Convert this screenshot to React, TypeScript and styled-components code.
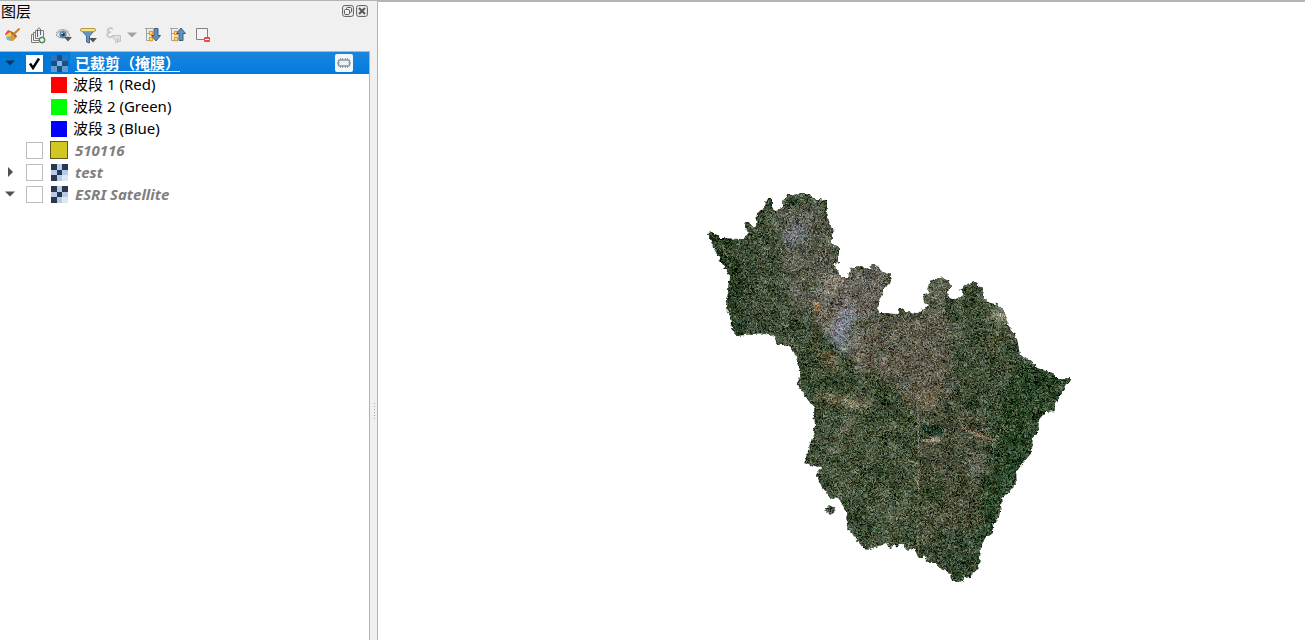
import React, { useState } from "react";
import styled, { createGlobalStyle } from "styled-components";

const GlobalStyle = createGlobalStyle`
  * { box-sizing: border-box; }
  html, body { margin: 0; height: 100%; }
  #root { height: 100%; }
  body, button, input {
    font-family: "Noto Sans", "Noto Sans CJK SC", sans-serif;
    font-size: 15px;
    color: #000;
  }
`;

const Window = styled.div`
  display: flex;
  min-height: 100%;
  background: #fff;
`;

const Dock = styled.aside`
  display: flex;
  flex: 0 0 378px;
  background: #f0f0f0;
  border-top: 1px solid #b4b4b4;
  border-right: 1px solid #b4b4b4;
`;

const DockBody = styled.div`
  display: flex;
  flex: 1;
  min-width: 0;
  flex-direction: column;
`;

const TitleBar = styled.header`
  display: flex;
  align-items: center;
  height: 20px;
  padding: 0 1px;
`;

const Title = styled.h1`
  flex: 1;
  margin: 0;
  font-size: 15px;
  font-weight: 400;
  line-height: 18px;
`;

const IconButton = styled.button<{ $width?: number }>`
  display: flex;
  align-items: center;
  justify-content: center;
  flex: none;
  width: ${(p) => p.$width ?? 25}px;
  height: 20px;
  padding: 0;
  border: 0;
  background: none;
`;

const ToolBar = styled.div`
  display: flex;
  align-items: center;
  height: 30px;
  padding-bottom: 2px;
`;

const Tree = styled.ul`
  flex: 1;
  margin: 0;
  padding: 0;
  list-style: none;
  background: #fff;
  border-top: 1px solid #b4b4b4;
  border-right: 1px solid #b4b4b4;
`;

const Row = styled.li<{ $selected?: boolean }>`
  display: flex;
  align-items: center;
  height: 22px;
  line-height: 20px;
  background: ${(p) => (p.$selected ? "#0078d7" : "transparent")};
`;

const LayerRow = styled(Row)`
  padding-bottom: 2px;
`;

const Toggle = styled(IconButton)`
  margin-right: 6px;
`;

const ToggleSpace = styled.span`
  flex: 0 0 26px;
`;

const Check = styled.input`
  appearance: none;
  display: flex;
  flex: none;
  align-items: center;
  justify-content: center;
  width: 17px;
  height: 17px;
  margin: 0 5px 0 0;
  border: 1px solid #bdbdbd;
  background: #fff;
  &:checked {
    border-color: #fff;
    background: #fff
      url("data:image/svg+xml,%3Csvg xmlns='http://www.w3.org/2000/svg' viewBox='0 0 15 15'%3E%3Cpath d='M3 7.5L6 12L12 2.5' fill='none' stroke='black' stroke-width='2.4'/%3E%3C/svg%3E");
  }
`;

const IconCell = styled.span`
  display: flex;
  flex: none;
  justify-content: center;
  width: 22px;
`;

const LayerName = styled.label<{ $selected?: boolean }>`
  display: flex;
  flex: 1;
  align-items: center;
  justify-content: space-between;
  height: 22px;
  padding: 0 16px 0 5px;
  font-weight: 700;
  font-style: ${(p) => (p.$selected ? "normal" : "italic")};
  color: ${(p) => (p.$selected ? "#fff" : "#808080")};
  background: ${(p) => (p.$selected ? "linear-gradient(#1a86dc, #027be0)" : "none")};
`;

const Underlined = styled.span`
  text-decoration: underline;
  text-underline-offset: 2px;
  white-space: nowrap;
`;

const MemoryButton = styled(IconButton)`
  height: 18px;
  border-radius: 2px;
  background: #f5f6f7;
`;

const BandRow = styled(Row)`
  padding-left: 51px;
  gap: 6px;
`;

const BandName = styled.span`
  padding-bottom: 2px;
`;

const Swatch = styled.span<{ $color: string; $outlined?: boolean }>`
  flex: none;
  width: ${(p) => (p.$outlined ? 18 : 16)}px;
  height: ${(p) => (p.$outlined ? 18 : 16)}px;
  background: ${(p) => p.$color};
  border: ${(p) => (p.$outlined ? "1px solid #5c5a20" : "0")};
`;

const Splitter = styled.div`
  display: flex;
  flex: 0 0 7px;
  flex-direction: column;
  align-items: center;
  justify-content: center;
  gap: 2px;
  padding: 180px 0 0 2px;
`;

const Grip = styled.i`
  width: 1px;
  height: 1px;
  background: #a8a8a8;
`;

const Canvas = styled.main`
  position: relative;
  flex: 1;
  min-width: 0;
  overflow: hidden;
  border-top: 2px solid #b4b4b4;
`;

const Raster = styled.svg`
  position: absolute;
  left: 322px;
  top: 183px;
`;

const FloatIcon = () => (
  <svg width="12" height="12" viewBox="0 0 12 12" fill="none" stroke="#5a5a5a">
    <rect x=".6" y=".6" width="10.8" height="10.8" rx="2" />
    <rect x="4.5" y="2.5" width="5" height="5" rx="1" />
    <rect x="2.5" y="4.5" width="5" height="5" rx="1" fill="#f0f0f0" />
  </svg>
);

const CloseIcon = () => (
  <svg width="12" height="12" viewBox="0 0 12 12" fill="none" stroke="#5a5a5a">
    <rect x=".6" y=".6" width="10.8" height="10.8" rx="2" />
    <path d="M3 3L9 9M9 3L3 9" strokeWidth="2.2" />
  </svg>
);

const StyleIcon = () => (
  <svg width="16" height="16" viewBox="0 0 16 16">
    <path d="M0 7L3 3L8 5L6 9L1 9Z" fill="#e8474c" />
    <path d="M1 8L5 5L9 8L6 11L1 11Z" fill="#fcdc3c" />
    <path d="M1 10L5 9L9 12L6 14L2 13Z" fill="#75b5e8" />
    <path d="M6 6L11 11L8 14C6 14 5 13 4 12C6 11 6 9 6 6Z" fill="#dd9a32" />
    <path d="M6 6L8 5L12 9L11 11Z" fill="#9d592b" />
    <path d="M9 7L14 2" stroke="#c58138" strokeWidth="2" strokeLinecap="round" />
  </svg>
);

const GroupIcon = () => (
  <svg width="16" height="17" viewBox="0 0 16 17" fill="none" stroke="#7d7d79">
    <path d="M3.5 7.5H1.5V15.5H9M5.5 5.5H3.5V13.5H10M5.5 3.5H13.5V11.5H5.5Z" />
    <path d="M7.500 10V3C7.500 .5 10.500 .5 10.500 3V8" stroke="#47688a" />
    <circle cx="12" cy="13" r="3" fill="#6aaa70" stroke="#498553" />
    <path d="M12 11V15M10 13H14" stroke="#fff" strokeWidth="1.3" />
  </svg>
);

const EyeIcon = () => (
  <svg width="18" height="16" viewBox="0 0 18 16">
    <path d="M1 8C4 3 11 2 15 8C11 12 5 12 1 8Z" fill="#e8edef" stroke="#969a9c" />
    <path d="M1 6C5 1 11 2 14 5" fill="none" stroke="#a8aaac" />
    <circle cx="8" cy="7.5" r="3.6" fill="#5c87aa" />
    <circle cx="8" cy="7.5" r="1.8" fill="#223f59" />
    <circle cx="7" cy="6.5" r=".8" fill="#fff" />
    <path d="M9 10H17L13 14.5Z" fill="#555" />
  </svg>
);

const FilterIcon = () => (
  <svg width="18" height="17" viewBox="0 0 18 17">
    <path d="M1.5 3.5L6.500 9V15L9.500 16V9L14.500 3.500Z" fill="#6895bd" stroke="#42698e" />
    <rect x=".5" y="1.5" width="15" height="3" rx="1.5" fill="#f4e48a" stroke="#b49b42" />
    <path d="M9 11H17L13 15.5Z" fill="#555" />
  </svg>
);

const ExpressionIcon = () => (
  <svg width="16" height="16" viewBox="0 0 16 16" fill="none" stroke="#c3c3c3">
    <path d="M7 2C4 0 1 2 2 4C2 5 3 5 5 5C1 5 0 9 3 10C5 11 7 9 7 8" strokeWidth="1.6" />
    <path d="M7.500 8.500H14.500V14.500H12.500V11.500M7.500 8.500V11.500L9.500 12.500V15.500H11.500V11.500" fill="#e2e2e2" />
  </svg>
);

const ExpandIcon = ({ up = false }: { up?: boolean }) => (
  <svg width="16" height="16" viewBox="0 0 16 16">
    <path d="M0 1.500H8M1.500 2V13.500H5M2 6.500H5" stroke="#a0a0a0" fill="none" />
    <path d="M4.500 4.500H7.500V7.500H4.500ZM4.500 10.500H7.500V13.500H4.500Z" fill="#fff2cf" stroke="#ed9b28" strokeWidth="1.3" />
    <path
      d={up ? "M9 13.500V6.500H6.500L11 1L15.500 6.500H13V13.500Z" : "M9 1.500V8.500H6.500L11 14L15.500 8.500H13V1.500Z"}
      fill="#668fb6"
      stroke="#365f87"
    />
  </svg>
);

const RemoveIcon = () => (
  <svg width="16" height="16" viewBox="0 0 16 16">
    <path d="M1.500 1.500H12.500V12.500H1.500Z" fill="#f4f4f4" stroke="#838383" />
    <rect x="9" y="10" width="6" height="5" rx="1" fill="#e94a50" />
    <path d="M10 12.500H14" stroke="#fff" />
  </svg>
);

const MemoryIcon = () => (
  <svg width="14" height="12" viewBox="0 0 14 12" fill="none" stroke="#8799a9">
    <path d="M3.500 1V3M5.500 1V3M8.500 1V3M10.500 1V3M3.500 9V11M5.500 9V11M8.500 9V11M10.500 9V11" />
    <rect x="1.500" y="3" width="11" height="6" rx="1" fill="#eef1f3" strokeWidth="1.6" />
    <path d="M0 6H1M13 6H14" />
  </svg>
);

const Arrow = ({ color, open = true }: { color: string; open?: boolean }) => (
  <svg width="10" height="10" viewBox="0 0 10 10">
    <path d={open ? "M0 2.500H10L5 7.500Z" : "M3 0V10L8 5Z"} fill={color} />
  </svg>
);

const rasterTiles = [
  ["#28374d", "#b5cbe7", "#28374d"],
  ["#b5cbe7", "#28374d", "#b5cbe7"],
  ["#28374d", "#b5cbe7", "#dce7f4"],
];

const selectedTiles = [
  ["#2c74b9", "#1c4e83", "#2c74b9"],
  ["#1c4e83", "#83b5e2", "#1c4e83"],
  ["#5d9cd5", "#1c4e83", "#5d9cd5"],
];

const RasterIcon = ({ selected = false }: { selected?: boolean }) => (
  <svg width="17" height="17" viewBox="0 0 18 18" shapeRendering="crispEdges">
    {(selected ? selectedTiles : rasterTiles).map((row, r) =>
      row.map((fill, c) => (
        <rect key={`${r}-${c}`} x={c * 6} y={r * 6} width="6" height="6" fill={fill} />
      )),
    )}
  </svg>
);

const boundary =
  "M708 233L712 232L721 238L742 239L744 236L748 234L745 222L748 222L753 228L756 226L757 212L763 210L768 198L772 198L772 208L776 210L782 208L782 202L787 195L802 194L810 194L812 199L820 199L822 202L827 199L827 212L829 222L832 229L835 229L832 235L832 245L839 247L839 264L837 262L834 265L842 277L848 277L850 268L858 266L870 269L872 264L880 268L884 273L891 272L891 282L885 287L880 298L877 308L880 313L898 314L900 309L905 309L907 312L918 313L923 309L928 305L924 303L923 296L929 293L927 285L932 280L943 277L949 281L951 287L947 292L948 297L952 299L962 298L963 293L959 290L967 284L975 282L980 286L983 288L983 297L990 303L997 304L1005 313L1008 325L1017 338L1020 355L1027 359L1035 364L1037 368L1053 373L1055 378L1070 378L1070 381L1055 403L1055 411L1045 412L1039 420L1038 433L1033 435L1032 452L1016 472L1017 482L1002 500L999 517L993 525L993 532L985 538L981 548L979 567L972 575L960 582L952 582L950 573L940 569L936 562L927 562L926 557L918 557L914 548L907 550L903 544L890 548L887 543L870 549L863 548L847 527L846 512L840 500L830 497L822 487L816 475L821 467L804 464L815 428L814 408L808 400L797 384L801 373L797 362L795 352L787 345L777 345L775 338L767 333L754 334L737 336L733 332L729 315L725 305L728 292L729 275L720 260L713 247Z M825 510L830 505L836 508L835 511L829 514Z";

const landCover: { d: string; fill: string }[] = [
  { d: "M700 225L745 238L742 280L752 336L725 336L720 290Z", fill: "#2b3d25" },
  { d: "M740 230L775 205L790 240L792 330L750 335Z", fill: "#414d38" },
  { d: "M775 205L820 195L835 240L835 300L800 320L785 290Z", fill: "#565a4c" },
  { d: "M789 195L812 195L812 206L785 208Z", fill: "#42503a" },
  { d: "M787 226L808 222L804 240L782 246Z", fill: "#6e747a" },
  { d: "M822 270L850 270L890 265L880 310L830 340L815 320Z", fill: "#67645a" },
  { d: "M821 280L834 275L840 286L825 297Z", fill: "#918a7b" },
  { d: "M846 302L856 310L842 348L828 338Z", fill: "#7b818e" },
  { d: "M845 338L866 328L860 354L842 354Z", fill: "#85877f" },
  { d: "M870 318L950 312L952 400L930 430L890 405L850 360Z", fill: "#5c5a4b" },
  { d: "M862 370L900 380L895 400L868 392Z", fill: "#48503a" },
  { d: "M923 280L950 280L945 315L925 320Z", fill: "#5e6352" },
  { d: "M952 298L1005 315L1018 355L980 400L950 390Z", fill: "#3f4c36" },
  { d: "M985 320L1004 325L1004 350L984 352Z", fill: "#4a5038" },
  { d: "M955 326L963 326L962 338L956 338Z", fill: "#85826f" },
  { d: "M994 306L1007 316L1006 326L990 314Z", fill: "#a5a493" },
  { d: "M795 350L830 362L850 385L825 410L800 390Z", fill: "#33442b" },
  { d: "M812 350L835 352L842 370L826 372Z", fill: "#5b583f" },
  { d: "M815 390L860 396L878 406L850 409L815 398Z", fill: "#716d52" },
  { d: "M870 385L905 395L915 425L890 430Z", fill: "#36462f" },
  { d: "M840 420L857 416L848 440L835 445Z", fill: "#666b58" },
  { d: "M825 445L848 440L845 480L822 480Z", fill: "#4f5843" },
  { d: "M850 430L918 410L918 555L860 550L842 500L825 475Z", fill: "#44513a" },
  { d: "M895 450L918 432L880 478L855 490Z", fill: "#34472e" },
  { d: "M845 498L862 495L878 550L850 535Z", fill: "#34462e" },
  { d: "M880 505L900 502L896 520L880 520Z", fill: "#5a6652" },
  { d: "M920 395L945 390L990 430L990 500L965 560L920 545Z", fill: "#474d39" },
  { d: "M924 392L936 392L934 408L922 408Z", fill: "#7b6a55" },
  { d: "M972 458L982 455L982 472L974 472Z", fill: "#7c7a6c" },
  { d: "M921 484L946 486L942 502L926 500Z", fill: "#304329" },
  { d: "M1025 358L1070 378L1035 445L1017 475L992 530L978 570L980 500L995 440L1005 390Z", fill: "#2a4226" },
  { d: "M935 530L980 535L975 580L950 580Z", fill: "#344630" },
];

const roads: { d: string; stroke: string; width: number }[] = [
  { d: "M918 395V556", stroke: "#858371", width: 1 },
  { d: "M762 248L795 249", stroke: "#7c8274", width: 1 },
  { d: "M722 245L730 265", stroke: "#6f7763", width: 1 },
  { d: "M727 285V320", stroke: "#6f7763", width: 1 },
  { d: "M962 427L978 435L997 441", stroke: "#9a7c66", width: 2 },
  { d: "M1019 406L1002 427L994 441", stroke: "#846b55", width: 1 },
  { d: "M994 442L992 468", stroke: "#807862", width: 1 },
  { d: "M922 441L940 439", stroke: "#8b816b", width: 3 },
  { d: "M906 458L918 464", stroke: "#a58e7c", width: 1 },
  { d: "M780 341L812 350", stroke: "#86735a", width: 1 },
  { d: "M935 465V485M936 480H955", stroke: "#646a55", width: 1 },
];

const SatelliteRaster = () => (
  <Raster width="380" height="405" viewBox="700 185 380 405" role="img" aria-label="ESRI Satellite">
    <defs>
      <clipPath id="boundary"><path d={boundary} /></clipPath>
      <filter id="soften" filterUnits="userSpaceOnUse" x="680" y="165" width="420" height="445" colorInterpolationFilters="sRGB">
        <feGaussianBlur stdDeviation="4" />
      </filter>
      <filter id="grain" filterUnits="userSpaceOnUse" x="700" y="185" width="380" height="405" colorInterpolationFilters="sRGB">
        <feTurbulence type="fractalNoise" baseFrequency="0.6" numOctaves="2" seed="7" result="fine" />
        <feColorMatrix in="fine" type="matrix" values="1.8 .45 0 0 -.62  1.8 .1 0 0 -.45  1.8 0 .4 0 -.6  0 0 0 0 1" result="speckle" />
        <feTurbulence type="fractalNoise" baseFrequency="0.09" numOctaves="3" seed="12" result="coarse" />
        <feColorMatrix in="coarse" type="matrix" values=".9 .2 0 0 -.05  .9 0 0 0 .05  .9 0 .1 0 0  0 0 0 0 1" result="patches" />
        <feComposite in="SourceGraphic" in2="speckle" operator="arithmetic" k2="1" k3=".5" k4="-.25" result="grained" />
        <feComposite in="grained" in2="patches" operator="arithmetic" k2="1" k3=".32" k4="-.16" />
      </filter>
      <filter id="coast" filterUnits="userSpaceOnUse" x="700" y="185" width="380" height="405" colorInterpolationFilters="sRGB">
        <feTurbulence type="fractalNoise" baseFrequency="0.25" numOctaves="2" seed="3" result="edge" />
        <feDisplacementMap in="SourceGraphic" in2="edge" scale="5" xChannelSelector="R" yChannelSelector="G" />
      </filter>
    </defs>
    <g filter="url(#coast)">
      <g clipPath="url(#boundary)">
        <g filter="url(#grain)">
          <rect x="700" y="185" width="380" height="405" fill="#3f4d37" />
          <g filter="url(#soften)">
            {landCover.map((p) => <path key={p.d} d={p.d} fill={p.fill} />)}
          </g>
          <path d="M814 304L819 300L821 309L816 313Z" fill="#98794f" />
          {roads.map((r) => <path key={r.d} d={r.d} fill="none" stroke={r.stroke} strokeWidth={r.width} />)}
          <path d="M921 424L930 426L941 424V434L931 435L921 431Z" fill="#203a2b" />
        </g>
      </g>
    </g>
  </Raster>
);

const tools: { label: string; icon: React.ReactNode; width?: number }[] = [
  { label: "打开图层样式面板", icon: <StyleIcon /> },
  { label: "添加组", icon: <GroupIcon /> },
  { label: "管理地图主题", icon: <EyeIcon />, width: 27 },
  { label: "过滤图例", icon: <FilterIcon />, width: 24 },
  { label: "按表达式过滤图例", icon: <ExpressionIcon /> },
  { label: "过滤选项", icon: <Arrow color="#a3a3a3" />, width: 12 },
  { label: "全部展开", icon: <ExpandIcon />, width: 29 },
  { label: "全部折叠", icon: <ExpandIcon up />, width: 21 },
  { label: "移除图层", icon: <RemoveIcon />, width: 29 },
];

const bands = [
  { name: "波段 1 (Red)", color: "#ff0000" },
  { name: "波段 2 (Green)", color: "#00ff00" },
  { name: "波段 3 (Blue)", color: "#0000ff" },
];

const layers: { id: string; arrow?: "open" | "closed"; swatch?: string }[] = [
  { id: "510116", swatch: "#d2c722" },
  { id: "test", arrow: "closed" },
  { id: "ESRI Satellite", arrow: "open" },
];

export default function App() {
  const [visible, setVisible] = useState<Record<string, boolean>>({ clipped: true });
  const toggle = (id: string) => setVisible((v) => ({ ...v, [id]: !v[id] }));

  return (
    <>
      <GlobalStyle />
      <Window>
        <Dock>
          <DockBody>
            <TitleBar>
              <Title>图层</Title>
              <IconButton $width={14} aria-label="浮动"><FloatIcon /></IconButton>
              <IconButton $width={14} aria-label="关闭"><CloseIcon /></IconButton>
            </TitleBar>
            <ToolBar>
              {tools.map((t) => (
                <IconButton key={t.label} $width={t.width} aria-label={t.label}>{t.icon}</IconButton>
              ))}
            </ToolBar>
            <Tree>
              <Row $selected>
                <Toggle $width={20} aria-label="折叠"><Arrow color="#12385c" /></Toggle>
                <Check type="checkbox" id="clipped" checked={!!visible.clipped} onChange={() => toggle("clipped")} />
                <IconCell><RasterIcon selected /></IconCell>
                <LayerName $selected htmlFor="clipped">
                  <Underlined>已裁剪（掩膜）</Underlined>
                  <MemoryButton $width={18} aria-label="临时图层"><MemoryIcon /></MemoryButton>
                </LayerName>
              </Row>
              {bands.map((b) => (
                <BandRow key={b.name}>
                  <Swatch $color={b.color} />
                  <BandName>{b.name}</BandName>
                </BandRow>
              ))}
              {layers.map((l) => (
                <LayerRow key={l.id}>
                  {l.arrow ? (
                    <Toggle $width={20} aria-label="展开或折叠"><Arrow color="#505050" open={l.arrow === "open"} /></Toggle>
                  ) : (
                    <ToggleSpace />
                  )}
                  <Check type="checkbox" id={l.id} checked={!!visible[l.id]} onChange={() => toggle(l.id)} />
                  <IconCell>{l.swatch ? <Swatch $color={l.swatch} $outlined /> : <RasterIcon />}</IconCell>
                  <LayerName htmlFor={l.id}>{l.id}</LayerName>
                </LayerRow>
              ))}
            </Tree>
          </DockBody>
          <Splitter>
            {[0, 1, 2, 3, 4, 5].map((n) => <Grip key={n} />)}
          </Splitter>
        </Dock>
        <Canvas>
          <SatelliteRaster />
        </Canvas>
      </Window>
    </>
  );
}
